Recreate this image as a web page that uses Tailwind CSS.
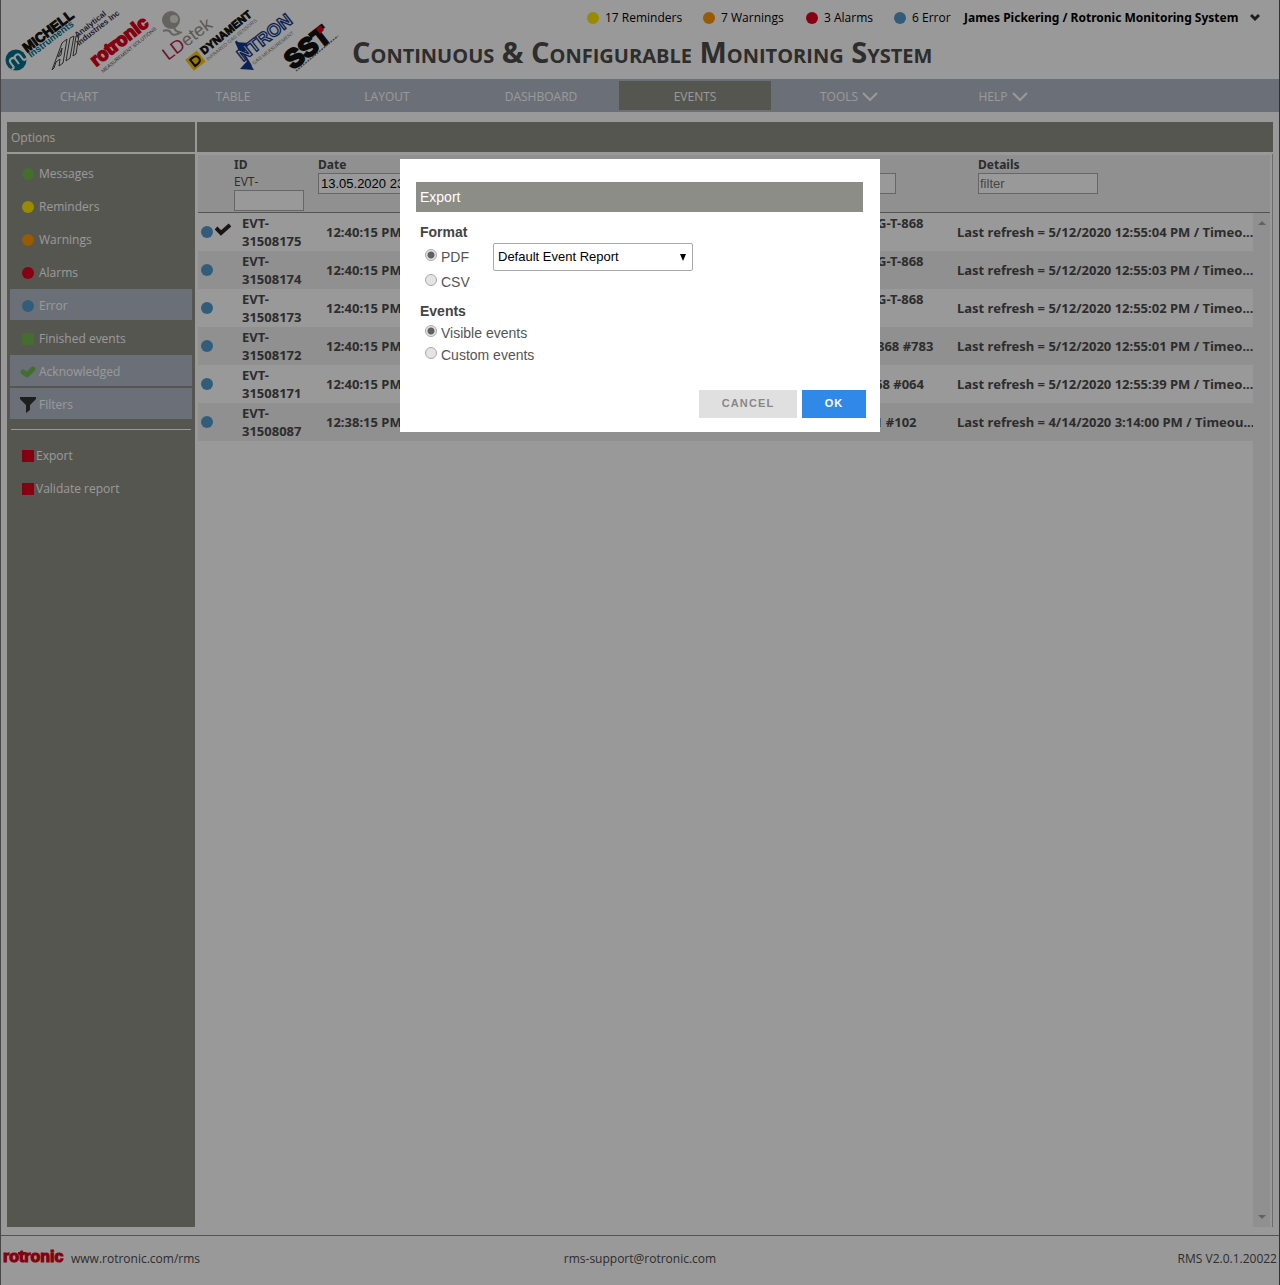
<!DOCTYPE html>
<html lang="en">
<head>
<meta charset="utf-8">
<meta name="viewport" content="width=device-width, initial-scale=1">
<title>Continuous &amp; Configurable Monitoring System</title>
<script src="https://cdn.jsdelivr.net/npm/@tailwindcss/browser@4"></script>
</head>
<body class="bg-white font-['Open_Sans',sans-serif] text-xs text-[#4c4c4c]">
<div class="flex min-h-screen flex-col border-x border-l-[#777777] border-r-[#2f5b85]">

  <header class="flex h-[79px] items-start">
    <svg class="h-[79px] w-[344px] shrink-0" viewBox="1 0 344 79" role="img" aria-label="Group company logos" font-family="'Liberation Sans',sans-serif">
      <!-- Michell Instruments -->
      <circle cx="16" cy="60" r="10.5" fill="#00708c"/>
      <g transform="translate(16 60) rotate(-37)"><path d="M-6 5V-1q0-3 3-3t3 3V5M0-1q0-3 3-3t3 3V5M-9 5h3M6 5h3" fill="none" stroke="#fff" stroke-width="2"/></g>
      <g font-weight="700">
        <text transform="translate(27 53) rotate(-37)" font-size="13.5" fill="#111" stroke="#111" stroke-width="1">MICHELL</text>
        <text transform="translate(31 58) rotate(-37)" font-size="9.5" fill="#00708c">Instruments</text>
        <!-- Analytical Industries -->
        <text transform="translate(77 38) rotate(-38)" font-size="8" fill="#33334e">Analytical</text>
        <text transform="translate(79 46) rotate(-38)" font-size="8" fill="#33334e">Industries Inc</text>
      </g>
      <path d="M52 70 62 43l5-4-4 24-4 3 1-7-4 3-2 6zM58 57l3-2 1-7zM66 61l4-23 4-2-4 22zM73 56l3-20 3-1-3 19z" fill="none" stroke="#444" stroke-width="1"/>
      <!-- Rotronic -->
      <text transform="translate(96 67) rotate(-38)" font-size="18" font-weight="700" fill="#e0001b" stroke="#e0001b" stroke-width="1.6">rotronic</text>
      <path d="m105 48 13-9" stroke="#e0001b" stroke-width="3"/>
      <text transform="translate(103 73) rotate(-39)" font-size="5" fill="#444">MEASUREMENT SOLUTIONS</text>
      <!-- LDetek -->
      <circle cx="171" cy="20" r="9" fill="#a9a59c"/>
      <circle cx="174" cy="19" r="4" fill="#e4e2dc"/>
      <path d="M163 31q6-2 8 2t11-1M174 27q1 5 6 5" fill="none" stroke="#a9a59c" stroke-width="2"/>
      <text transform="translate(168 61) rotate(-37)" font-size="18" fill="#b51c50">LD<tspan fill="#999288">etek</tspan></text>
      <!-- Dynament -->
      <g transform="translate(195 61) rotate(-39)">
        <path d="M-7-7H8V7H-7z" fill="#ffc800"/>
        <path d="M-3-4H0q5 0 5 4t-5 4H-3z" fill="none" stroke="#111" stroke-width="2"/>
      </g>
      <text transform="translate(204 55) rotate(-39)" font-size="11" font-weight="700" fill="#111" stroke="#111" stroke-width=".8">DYNAMENT</text>
      <text transform="translate(208 61) rotate(-39)" font-size="5" fill="#888">INFRARED GAS SENSORS</text>
      <!-- Ntron -->
      <path d="m235 42 14 1-7 15zM240 69l8-9 6 10z" fill="#163a8c"/>
      <path d="M236 41 251 66" stroke="#163a8c" stroke-width="2"/>
      <text transform="translate(243 62) rotate(-38)" font-size="18" font-weight="700" fill="#fff" stroke="#163a8c" stroke-width="1.3">NTRON</text>
      <text transform="translate(254 65) rotate(-38)" font-size="5" fill="#777">GAS MEASUREMENT</text>
      <!-- SST -->
      <text transform="translate(293 70) rotate(-38)" font-size="26" font-weight="700" fill="#111" stroke="#111" stroke-width="2.4">SST</text>
      <path d="m320 25 4 5-4 4-4-5z" fill="#e0001b"/>
      <path d="m296 71 42-35" stroke="#777" stroke-width="1.5" stroke-dasharray="2 1"/>
    </svg>
    <div class="flex min-w-0 flex-1 flex-col">
      <div class="flex h-9 items-center justify-end pr-[19px] whitespace-nowrap text-black">
        <a href="#" class="flex w-[116px] items-center gap-1.5"><span class="size-3 rounded-full bg-[#ffe600]"></span>17 Reminders</a>
        <a href="#" class="flex w-[103px] items-center gap-1.5"><span class="size-3 rounded-full bg-[#ff9600]"></span>7 Warnings</a>
        <a href="#" class="flex w-[88px] items-center gap-1.5"><span class="size-3 rounded-full bg-[#e2001d]"></span>3 Alarms</a>
        <a href="#" class="flex w-[70px] items-center gap-1.5"><span class="size-3 rounded-full bg-[#529ccd]"></span>6 Error</a>
        <button class="flex w-[296px] items-center justify-between font-['Noto_Sans',sans-serif] font-bold">James Pickering / Rotronic Monitoring System
          <svg class="size-2.5" viewBox="0 0 10 10" fill="none" stroke="#333" stroke-width="3"><path d="m1 2 4 4 4-4"/></svg>
        </button>
      </div>
      <h1 class="pl-[7px] text-[29px] leading-8 font-bold whitespace-nowrap text-[#4c4c4c] [font-variant:small-caps]">Continuous &amp; Configurable Monitoring System</h1>
    </div>
  </header>

  <nav class="flex h-[33px] gap-0.5 bg-[#b2bbc8] px-0.5 pt-0.5 text-white">
    <a href="#" class="flex h-[29px] w-[152px] items-center justify-center pt-0.5">CHART</a>
    <a href="#" class="flex h-[29px] w-[152px] items-center justify-center pt-0.5">TABLE</a>
    <a href="#" class="flex h-[29px] w-[152px] items-center justify-center pt-0.5">LAYOUT</a>
    <a href="#" class="flex h-[29px] w-[152px] items-center justify-center pt-0.5">DASHBOARD</a>
    <a href="#" class="flex h-[29px] w-[152px] items-center justify-center bg-[#8e8f86] pt-0.5">EVENTS</a>
    <a href="#" class="flex h-[29px] w-[152px] items-center justify-center gap-1 pt-0.5">TOOLS <svg class="h-4 w-4" viewBox="0 0 16 16" fill="none" stroke="#fff" stroke-width="2"><path d="m1 4 7 7 7-7"/></svg></a>
    <a href="#" class="flex h-[29px] w-[152px] items-center justify-center gap-1 pt-0.5">HELP <svg class="h-4 w-4" viewBox="0 0 16 16" fill="none" stroke="#fff" stroke-width="2"><path d="m1 4 7 7 7-7"/></svg></a>
  </nav>

  <div class="flex flex-1 gap-0.5 px-1.5 pt-2.5 pb-2">
    <aside class="flex w-[188px] shrink-0 flex-col gap-0.5 text-white">
      <h2 class="flex h-[30px] items-center bg-[#8e8f86] pt-0.5 pl-1">Options</h2>
      <div class="flex flex-1 flex-col gap-0.5 bg-[#8e8f86] px-[3px] pt-[3px]">
        <a href="#" class="flex h-[31px] items-center gap-[5px] pt-[3px] pl-3"><span class="size-3 rounded-full bg-[#71b750]"></span>Messages</a>
        <a href="#" class="flex h-[31px] items-center gap-[5px] pt-[3px] pl-3"><span class="size-3 rounded-full bg-[#ffe600]"></span>Reminders</a>
        <a href="#" class="flex h-[31px] items-center gap-[5px] pt-[3px] pl-3"><span class="size-3 rounded-full bg-[#ff9600]"></span>Warnings</a>
        <a href="#" class="flex h-[31px] items-center gap-[5px] pt-[3px] pl-3"><span class="size-3 rounded-full bg-[#e2001d]"></span>Alarms</a>
        <a href="#" class="flex h-[31px] items-center gap-[5px] bg-[#b2bbc8] pt-[3px] pl-3"><span class="size-3 rounded-full bg-[#529ccd]"></span>Error</a>
        <a href="#" class="flex h-[31px] items-center gap-[5px] pt-[3px] pl-3"><span class="size-3 bg-[#71b750]"></span>Finished events</a>
        <a href="#" class="flex h-[31px] items-center gap-[3px] bg-[#b2bbc8] pt-[3px] pl-2.5"><svg class="size-4" viewBox="0 0 16 16" fill="none" stroke="#71b750" stroke-width="5" stroke-linecap="round" stroke-linejoin="round"><path d="m3 8 4 3 6-6"/></svg>Acknowledged</a>
        <a href="#" class="flex h-[31px] items-center gap-[3px] bg-[#b2bbc8] pt-[3px] pl-2.5"><svg class="size-4" viewBox="0 0 16 16" fill="#333"><path d="M0 0h16v2l-6 6v5l-4 3V8L0 2z"/></svg>Filters</a>
        <hr class="mx-px mt-2 mb-1 border-white">
        <a href="#" class="mt-1 flex h-[31px] items-center gap-0.5 pl-3"><span class="size-3 bg-[#e2001d]"></span>Export</a>
        <a href="#" class="flex h-[31px] items-center gap-0.5 pl-3"><span class="size-3 bg-[#e2001d]"></span>Validate report</a>
      </div>
    </aside>

    <main class="flex min-w-0 flex-1 flex-col gap-0.5">
      <div class="h-[30px] bg-[#8e8f86]"></div>
      <div class="flex flex-1 flex-col border-r border-[#b5b5b5] pt-px pr-0.5 pl-px font-['Noto_Sans',sans-serif]">
        <table class="w-full table-fixed bg-[#f0f0f0] text-left">
          <colgroup><col class="w-9"><col class="w-[84px]"><col class="w-[458px]"><col class="w-[202px]"><col></colgroup>
          <thead>
            <tr class="h-[57px] border-b border-[#8b8b8b] align-top">
              <td></td>
              <th class="pt-0.5 leading-4"><label for="fid" class="block">ID<span class="block font-['Open_Sans',sans-serif] leading-[18px] font-normal">EVT-</span></label><input id="fid" class="-mt-px block h-[21px] w-[70px] border border-[#aaaaaa] bg-white px-0.5"></th>
              <th class="pt-0.5 leading-4"><label for="fdate" class="block">Date</label><input id="fdate" value="13.05.2020 23" class="block h-[21px] w-[120px] border border-[#aaaaaa] bg-white px-0.5 font-['Liberation_Sans',sans-serif] text-[13px] font-normal text-black"></th>
              <th class="pt-[18px]"><input aria-label="Device filter" class="block h-[21px] w-[120px] border border-[#aaaaaa] bg-white"></th>
              <th class="pt-0.5 leading-4"><label for="fdet" class="block">Details</label><input id="fdet" placeholder="filter" class="block h-[21px] w-[120px] border border-[#aaaaaa] bg-white px-px font-['Liberation_Sans',sans-serif] text-[13px] font-normal placeholder:text-[#757575]"></th>
            </tr>
          </thead>
        </table>
        <div class="flex flex-1">
          <div class="min-w-0 flex-1">
            <table class="w-full table-fixed text-left text-[13px] leading-[18px] font-bold">
              <colgroup><col class="w-9"><col class="w-[84px]"><col class="w-[551px]"><col class="w-20"><col></colgroup>
              <tbody>
                <tr class="h-[38px]">
                  <td class="pl-[3px]"><span class="flex items-center gap-0.5"><span class="size-3 rounded-full bg-[#529ccd]"></span><svg class="size-4 -translate-y-1" viewBox="0 0 16 16" fill="none" stroke="#2a2424" stroke-width="4"><path d="m1 8 5 5 9-8"/></svg></span></td>
                  <td class="pl-2">EVT-<br>31508175</td><td class="pl-2">12:40:15 PM</td><td class="pt-px pl-2 align-top whitespace-nowrap">G-T-868</td><td class="pl-2 whitespace-nowrap">Last refresh = 5/12/2020 12:55:04 PM / Timeo...</td>
                </tr>
                <tr class="h-[38px] bg-[#f0f0f0]">
                  <td class="pl-[3px]"><span class="block size-3 rounded-full bg-[#529ccd]"></span></td>
                  <td class="pl-2">EVT-<br>31508174</td><td class="pl-2">12:40:15 PM</td><td class="pt-px pl-2 align-top whitespace-nowrap">G-T-868</td><td class="pl-2 whitespace-nowrap">Last refresh = 5/12/2020 12:55:03 PM / Timeo...</td>
                </tr>
                <tr class="h-[38px]">
                  <td class="pl-[3px]"><span class="block size-3 rounded-full bg-[#529ccd]"></span></td>
                  <td class="pl-2">EVT-<br>31508173</td><td class="pl-2">12:40:15 PM</td><td class="pt-px pl-2 align-top whitespace-nowrap">G-T-868</td><td class="pl-2 whitespace-nowrap">Last refresh = 5/12/2020 12:55:02 PM / Timeo...</td>
                </tr>
                <tr class="h-[38px] bg-[#f0f0f0]">
                  <td class="pl-[3px]"><span class="block size-3 rounded-full bg-[#529ccd]"></span></td>
                  <td class="pl-2">EVT-<br>31508172</td><td class="pl-2">12:40:15 PM</td><td class="pl-2 whitespace-nowrap">868 #783</td><td class="pl-2 whitespace-nowrap">Last refresh = 5/12/2020 12:55:01 PM / Timeo...</td>
                </tr>
                <tr class="h-[38px]">
                  <td class="pl-[3px]"><span class="block size-3 rounded-full bg-[#529ccd]"></span></td>
                  <td class="pl-2">EVT-<br>31508171</td><td class="pl-2">12:40:15 PM</td><td class="pl-1.5 whitespace-nowrap">68 #064</td><td class="pl-2 whitespace-nowrap">Last refresh = 5/12/2020 12:55:39 PM / Timeo...</td>
                </tr>
                <tr class="h-[38px] bg-[#f0f0f0]">
                  <td class="pl-[3px]"><span class="block size-3 rounded-full bg-[#529ccd]"></span></td>
                  <td class="pl-2">EVT-<br>31508087</td><td class="pl-2">12:38:15 PM</td><td class="pl-1.5 whitespace-nowrap">1 #102</td><td class="pl-2 whitespace-nowrap">Last refresh = 4/14/2020 3:14:00 PM / Timeou...</td>
                </tr>
              </tbody>
            </table>
          </div>
          <div class="flex w-[17px] flex-col items-center justify-between bg-[#f1f1f1] py-1.5" aria-hidden="true">
            <svg class="h-2 w-2" viewBox="0 0 8 8" fill="#a3a3a3"><path d="m0 6 4-4 4 4z"/></svg>
            <svg class="h-2 w-2" viewBox="0 0 8 8" fill="#a3a3a3"><path d="m0 2 4 4 4-4z"/></svg>
          </div>
        </div>
      </div>
    </main>
  </div>

  <footer class="grid h-[50px] grid-cols-3 items-center border-t border-[#8b8b8b] px-0.5 pb-1">
    <div class="flex items-center gap-[7px]">
      <svg class="-mt-1.5 h-5 w-[61px]" viewBox="0 0 61 20" role="img" aria-label="rotronic"><text x="0" y="16" font-family="'Liberation Sans',sans-serif" font-weight="700" font-size="16" fill="#e0001b" stroke="#e0001b" stroke-width="1.2">rotronic</text><path d="M15 7h8" stroke="#e0001b" stroke-width="2"/></svg>
      <a href="#">www.rotronic.com/rms</a>
    </div>
    <a href="#" class="text-center">rms-support@rotronic.com</a>
    <span class="text-right">RMS V2.0.1.20022</span>
  </footer>
</div>

<div class="fixed inset-0 flex items-start justify-center bg-black/40 pt-[159px]">
  <form role="dialog" aria-labelledby="dlg" class="flex h-[273px] w-[480px] flex-col bg-white pt-[23px] pr-3.5 pl-4 font-['Liberation_Sans',sans-serif] text-sm text-[#555555]">
    <h2 id="dlg" class="mr-[3px] flex h-[30px] items-center bg-[#8c8d86] pl-1 text-white">Export</h2>
    <fieldset class="pl-1">
      <legend class="pt-3 leading-4 font-bold text-[#444444]">Format</legend>
      <div class="mt-px flex h-8 items-center">
        <label class="flex w-[73px] items-center gap-1 pl-[5px]"><input type="radio" name="format" checked class="-mt-1 size-3 appearance-none rounded-full border border-[#aaaaaa] bg-[#e4e4e4] checked:bg-[radial-gradient(circle,#606060_3px,#e4e4e4_4px)]">PDF</label>
        <select aria-label="Report template" class="h-7 w-[200px] appearance-none rounded-xs border border-[#a9a9a9] bg-white px-1 text-[13px] text-black"><option>Default Event Report</option></select>
        <svg class="pointer-events-none -ml-3.5 size-2" viewBox="0 0 8 8"><path d="M1 1h6L4 8z"/></svg>
      </div>
      <label class="flex h-[18px] items-center gap-1 pl-[5px]"><input type="radio" name="format" class="-mt-1 size-3 appearance-none rounded-full border border-[#aaaaaa] bg-[#e4e4e4] checked:bg-[radial-gradient(circle,#606060_3px,#e4e4e4_4px)]">CSV</label>
    </fieldset>
    <fieldset class="pl-1">
      <legend class="pt-3 leading-4 font-bold text-[#444444]">Events</legend>
      <label class="mt-[3px] flex h-[22px] items-center gap-1 pl-[5px]"><input type="radio" name="events" checked class="-mt-1 size-3 appearance-none rounded-full border border-[#aaaaaa] bg-[#e4e4e4] checked:bg-[radial-gradient(circle,#606060_3px,#e4e4e4_4px)]">Visible events</label>
      <label class="flex h-[22px] items-center gap-1 pl-[5px]"><input type="radio" name="events" class="-mt-1 size-3 appearance-none rounded-full border border-[#aaaaaa] bg-[#e4e4e4] checked:bg-[radial-gradient(circle,#606060_3px,#e4e4e4_4px)]">Custom events</label>
    </fieldset>
    <div class="mt-auto mb-3.5 flex justify-end gap-[5px] text-[11px] tracking-widest">
      <button type="button" class="h-7 w-[98px] bg-[#e0e0e0] font-bold text-[#888888]">CANCEL</button>
      <button type="button" class="h-7 w-16 bg-[#3089e8] font-bold text-white">OK</button>
    </div>
  </form>
</div>
</body>
</html>
